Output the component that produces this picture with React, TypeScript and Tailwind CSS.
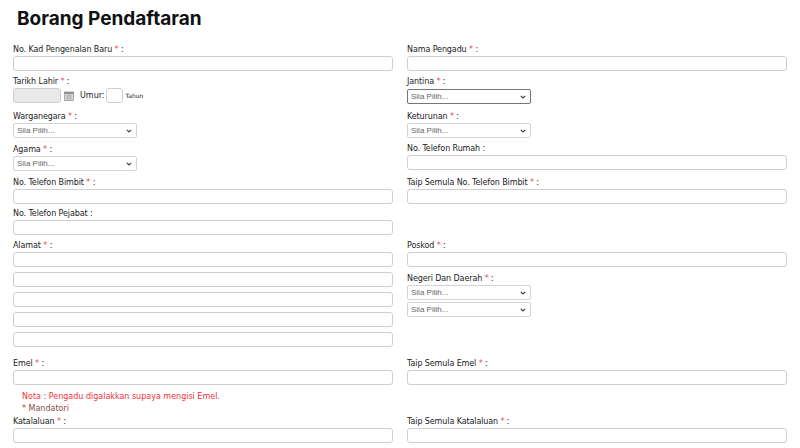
import React from 'react';

const font = { fontFamily: '"DejaVu Sans", "Noto Sans", sans-serif' };

function Label({ text, req = false }: { text: string; req?: boolean }) {
  return (
    <div className="h-[13px] pt-[2px] text-[8px] leading-[11px] text-[#222] tracking-[-0.1px]">
      {text}
      {req && <span className="text-[#e8474f]"> *</span>} :
    </div>
  );
}

function TextBox({ className = '' }: { className?: string }) {
  return <div className={`h-[15px] rounded-[3px] border border-[#cfcfcf] bg-white ${className}`} />;
}

function SelectBox({ dark = false }: { dark?: boolean }) {
  return (
    <div
      className={`flex h-[15px] w-[124px] items-center justify-between rounded-[2px] border bg-white pl-[3px] pr-[4px] ${
        dark ? 'border-[#767676]' : 'border-[#d4d4d4]'
      }`}
    >
      <span className="text-[8px] text-[#666]" style={{ fontFamily: '"Liberation Sans", Arial, sans-serif' }}>
        Sila Pilih...
      </span>
      <svg width="6" height="4" viewBox="0 0 6 4">
        <path d="M0.8 0.8 L3 3 L5.2 0.8" fill="none" stroke="#444" strokeWidth="1.2" />
      </svg>
    </div>
  );
}

function Field({ label, req, children }: { label: string; req?: boolean; children?: React.ReactNode }) {
  return (
    <div className="flex flex-col gap-[1px]">
      <Label text={label} req={req} />
      {children ?? <TextBox />}
    </div>
  );
}

export default function App() {
  return (
    <div className="h-[448px] w-[800px] overflow-hidden bg-white" style={font}>
      <h1
        className="pl-[17px] pt-[5px] text-[19px] font-bold leading-[28px] text-[#111]"
        style={{ fontFamily: 'Inter, "Liberation Sans", sans-serif' }}
      >
        Borang Pendaftaran
      </h1>

      <div className="grid grid-cols-2 gap-x-[14px] px-[13px] pt-[9px]">
        {/* row 1 */}
        <Field label="No. Kad Pengenalan Baru" req />
        <Field label="Nama Pengadu" req />

        {/* row 2 */}
        <div className="mt-[3px]">
          <Field label="Tarikh Lahir" req>
            <div className="flex h-[15px] items-center">
              <div className="h-[15px] w-[48px] rounded-[3px] border border-[#cfcfcf] bg-[#e9e9e9]" />
              <svg className="ml-[3px]" width="10" height="10" viewBox="0 0 10 10">
                <rect x="0.5" y="1" width="9" height="8.5" fill="#d7d7d7" stroke="#9a9a9a" strokeWidth="0.8" />
                <rect x="0.5" y="1" width="9" height="2" fill="#8c8c8c" />
                <path d="M2 4.5h6M2 6h6M2 7.5h6M3.5 3.5v5M5 3.5v5M6.5 3.5v5" stroke="#a8a8a8" strokeWidth="0.5" />
              </svg>
              <span className="ml-[6px] text-[8px] text-[#222]">Umur:</span>
              <div className="ml-[1px] h-[15px] w-[17px] rounded-[3px] border border-[#cfcfcf]" />
              <span className="ml-[3px] text-[6px] text-[#222]">Tahun</span>
            </div>
          </Field>
        </div>
        <div className="mt-[3px]">
          <Field label="Jantina" req>
            <div className="mt-[1px]">
              <SelectBox dark />
            </div>
          </Field>
        </div>

        {/* row 3 */}
        <div className="mt-[5px]">
          <Field label="Warganegara" req>
            <SelectBox />
          </Field>
        </div>
        <div className="mt-[5px]">
          <Field label="Keturunan" req>
            <SelectBox />
          </Field>
        </div>

        {/* row 4 */}
        <div className="mt-[4px]">
          <Field label="Agama" req>
            <SelectBox />
          </Field>
        </div>
        <div className="mt-[3px]">
          <Field label="No. Telefon Rumah" />
        </div>

        {/* row 5 */}
        <div className="mt-[4px]">
          <Field label="No. Telefon Bimbit" req />
        </div>
        <div className="mt-[4px]">
          <Field label="Taip Semula No. Telefon Bimbit" req />
        </div>

        {/* row 6 */}
        <div className="col-start-1 mt-[2px]">
          <Field label="No. Telefon Pejabat" />
        </div>
        <div />

        {/* row 7 */}
        <div className="mt-[3px] flex flex-col gap-[1px]">
          <Label text="Alamat" req />
          <div className="flex flex-col gap-[5px]">
            <TextBox />
            <TextBox />
            <TextBox />
            <TextBox />
            <TextBox />
          </div>
        </div>
        <div className="mt-[3px] flex flex-col">
          <Field label="Poskod" req />
          <div className="mt-[4px]">
            <Label text="Negeri Dan Daerah" req />
          </div>
          <div className="mt-[1px] flex flex-col gap-[2px]">
            <SelectBox />
            <SelectBox />
          </div>
        </div>

        {/* row 8 */}
        <div className="mt-[9px]">
          <Field label="Emel" req />
          <div className="mt-[6px] pl-[9px] text-[8px] leading-[12px]">
            <div className="text-[#f0323a]">Nota : Pengadu digalakkan supaya mengisi Emel.</div>
            <div className="text-[#8a4b3c]">* Mandatori</div>
          </div>
        </div>
        <div className="mt-[9px]">
          <Field label="Taip Semula Emel" req />
        </div>

        {/* row 9 */}
        <div className="-mt-[1px]">
          <Field label="Katalaluan" req />
        </div>
        <div className="-mt-[1px]">
          <Field label="Taip Semula Katalaluan" req />
        </div>
      </div>
    </div>
  );
}
